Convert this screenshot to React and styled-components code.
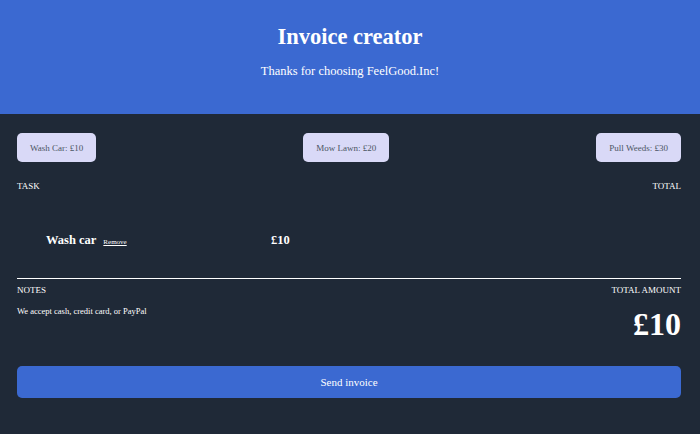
import React, { useState } from "react";
import styled, { createGlobalStyle } from "styled-components";

const GlobalStyle = createGlobalStyle`
  html, body {
    margin: 0;
    padding: 0;
    background: #1f2937;
    font-family: "Liberation Serif", "Times New Roman", serif;
    color: #ffffff;
  }
`;

const Header = styled.header`
  background: #3b69d1;
  height: 114px;
  display: flex;
  flex-direction: column;
  align-items: center;
  padding-top: 24px;
  box-sizing: border-box;
`;

const Title = styled.h1`
  margin: 0;
  font-size: 22.5px;
  font-weight: bold;
`;

const Subtitle = styled.p`
  margin: 14px 0 0;
  font-size: 12.5px;
`;

const Main = styled.main`
  padding: 19px 19px 0 17px;
`;

const ServiceRow = styled.div`
  display: flex;
  justify-content: space-between;
`;

const ServiceButton = styled.button`
  background: #d9d9f7;
  color: #4b5563;
  border: none;
  border-radius: 5px;
  height: 29px;
  padding: 0 13px;
  font-family: inherit;
  font-size: 9px;
  cursor: pointer;
`;

const LabelRow = styled.div`
  display: flex;
  justify-content: space-between;
  font-size: 9px;
  margin-top: ${(p) => p.$top || 0}px;
`;

const TaskList = styled.div`
  height: 88px;
  padding-top: 8px;
  box-sizing: border-box;
  display: flex;
  flex-direction: column;
  justify-content: center;
  border-bottom: 1.5px solid #ffffff;
`;

const TaskRow = styled.div`
  display: grid;
  grid-template-columns: 225px auto;
  align-items: baseline;
  padding-left: 29px;
`;

const TaskName = styled.span`
  font-size: 12.5px;
  font-weight: bold;
`;

const RemoveLink = styled.a`
  font-size: 7px;
  color: #ffffff;
  text-decoration: underline;
  margin-left: 7px;
  cursor: pointer;
`;

const Price = styled.span`
  font-size: 12.5px;
  font-weight: bold;
`;

const FooterRow = styled.div`
  display: flex;
  justify-content: space-between;
  align-items: flex-start;
`;

const Note = styled.p`
  margin: 11px 0 0;
  font-size: 8.5px;
`;

const TotalBlock = styled.div`
  text-align: right;
`;

const Total = styled.div`
  font-size: 32px;
  font-weight: bold;
  margin-top: 11px;
`;

const SendButton = styled.button`
  display: block;
  width: 100%;
  height: 32px;
  margin-top: 23px;
  background: #3b69d1;
  color: #ffffff;
  border: none;
  border-radius: 5px;
  font-family: inherit;
  font-size: 11px;
  cursor: pointer;
`;

const services = [
  { label: "Wash Car", name: "Wash car", price: 10 },
  { label: "Mow Lawn", name: "Mow lawn", price: 20 },
  { label: "Pull Weeds", name: "Pull weeds", price: 30 },
];

export default function App() {
  const [tasks, setTasks] = useState([services[0]]);
  const total = tasks.reduce((s, t) => s + t.price, 0);

  const add = (svc) => {
    if (!tasks.find((t) => t.name === svc.name)) setTasks([...tasks, svc]);
  };

  return (
    <>
      <GlobalStyle />
      <Header>
        <Title>Invoice creator</Title>
        <Subtitle>Thanks for choosing FeelGood.Inc!</Subtitle>
      </Header>
      <Main>
        <ServiceRow>
          {services.map((s) => (
            <ServiceButton key={s.label} onClick={() => add(s)}>
              {s.label}: £{s.price}
            </ServiceButton>
          ))}
        </ServiceRow>
        <LabelRow $top={19}>
          <span>TASK</span>
          <span>TOTAL</span>
        </LabelRow>
        <TaskList>
          {tasks.map((t) => (
            <TaskRow key={t.name}>
              <span>
                <TaskName>{t.name}</TaskName>
                <RemoveLink onClick={() => setTasks(tasks.filter((x) => x !== t))}>
                  Remove
                </RemoveLink>
              </span>
              <Price>£{t.price}</Price>
            </TaskRow>
          ))}
        </TaskList>
        <FooterRow>
          <div>
            <LabelRow $top={6}>NOTES</LabelRow>
            <Note>We accept cash, credit card, or PayPal</Note>
          </div>
          <TotalBlock>
            <LabelRow $top={6}>TOTAL AMOUNT</LabelRow>
            <Total>£{total}</Total>
          </TotalBlock>
        </FooterRow>
        <SendButton>Send invoice</SendButton>
      </Main>
    </>
  );
}
